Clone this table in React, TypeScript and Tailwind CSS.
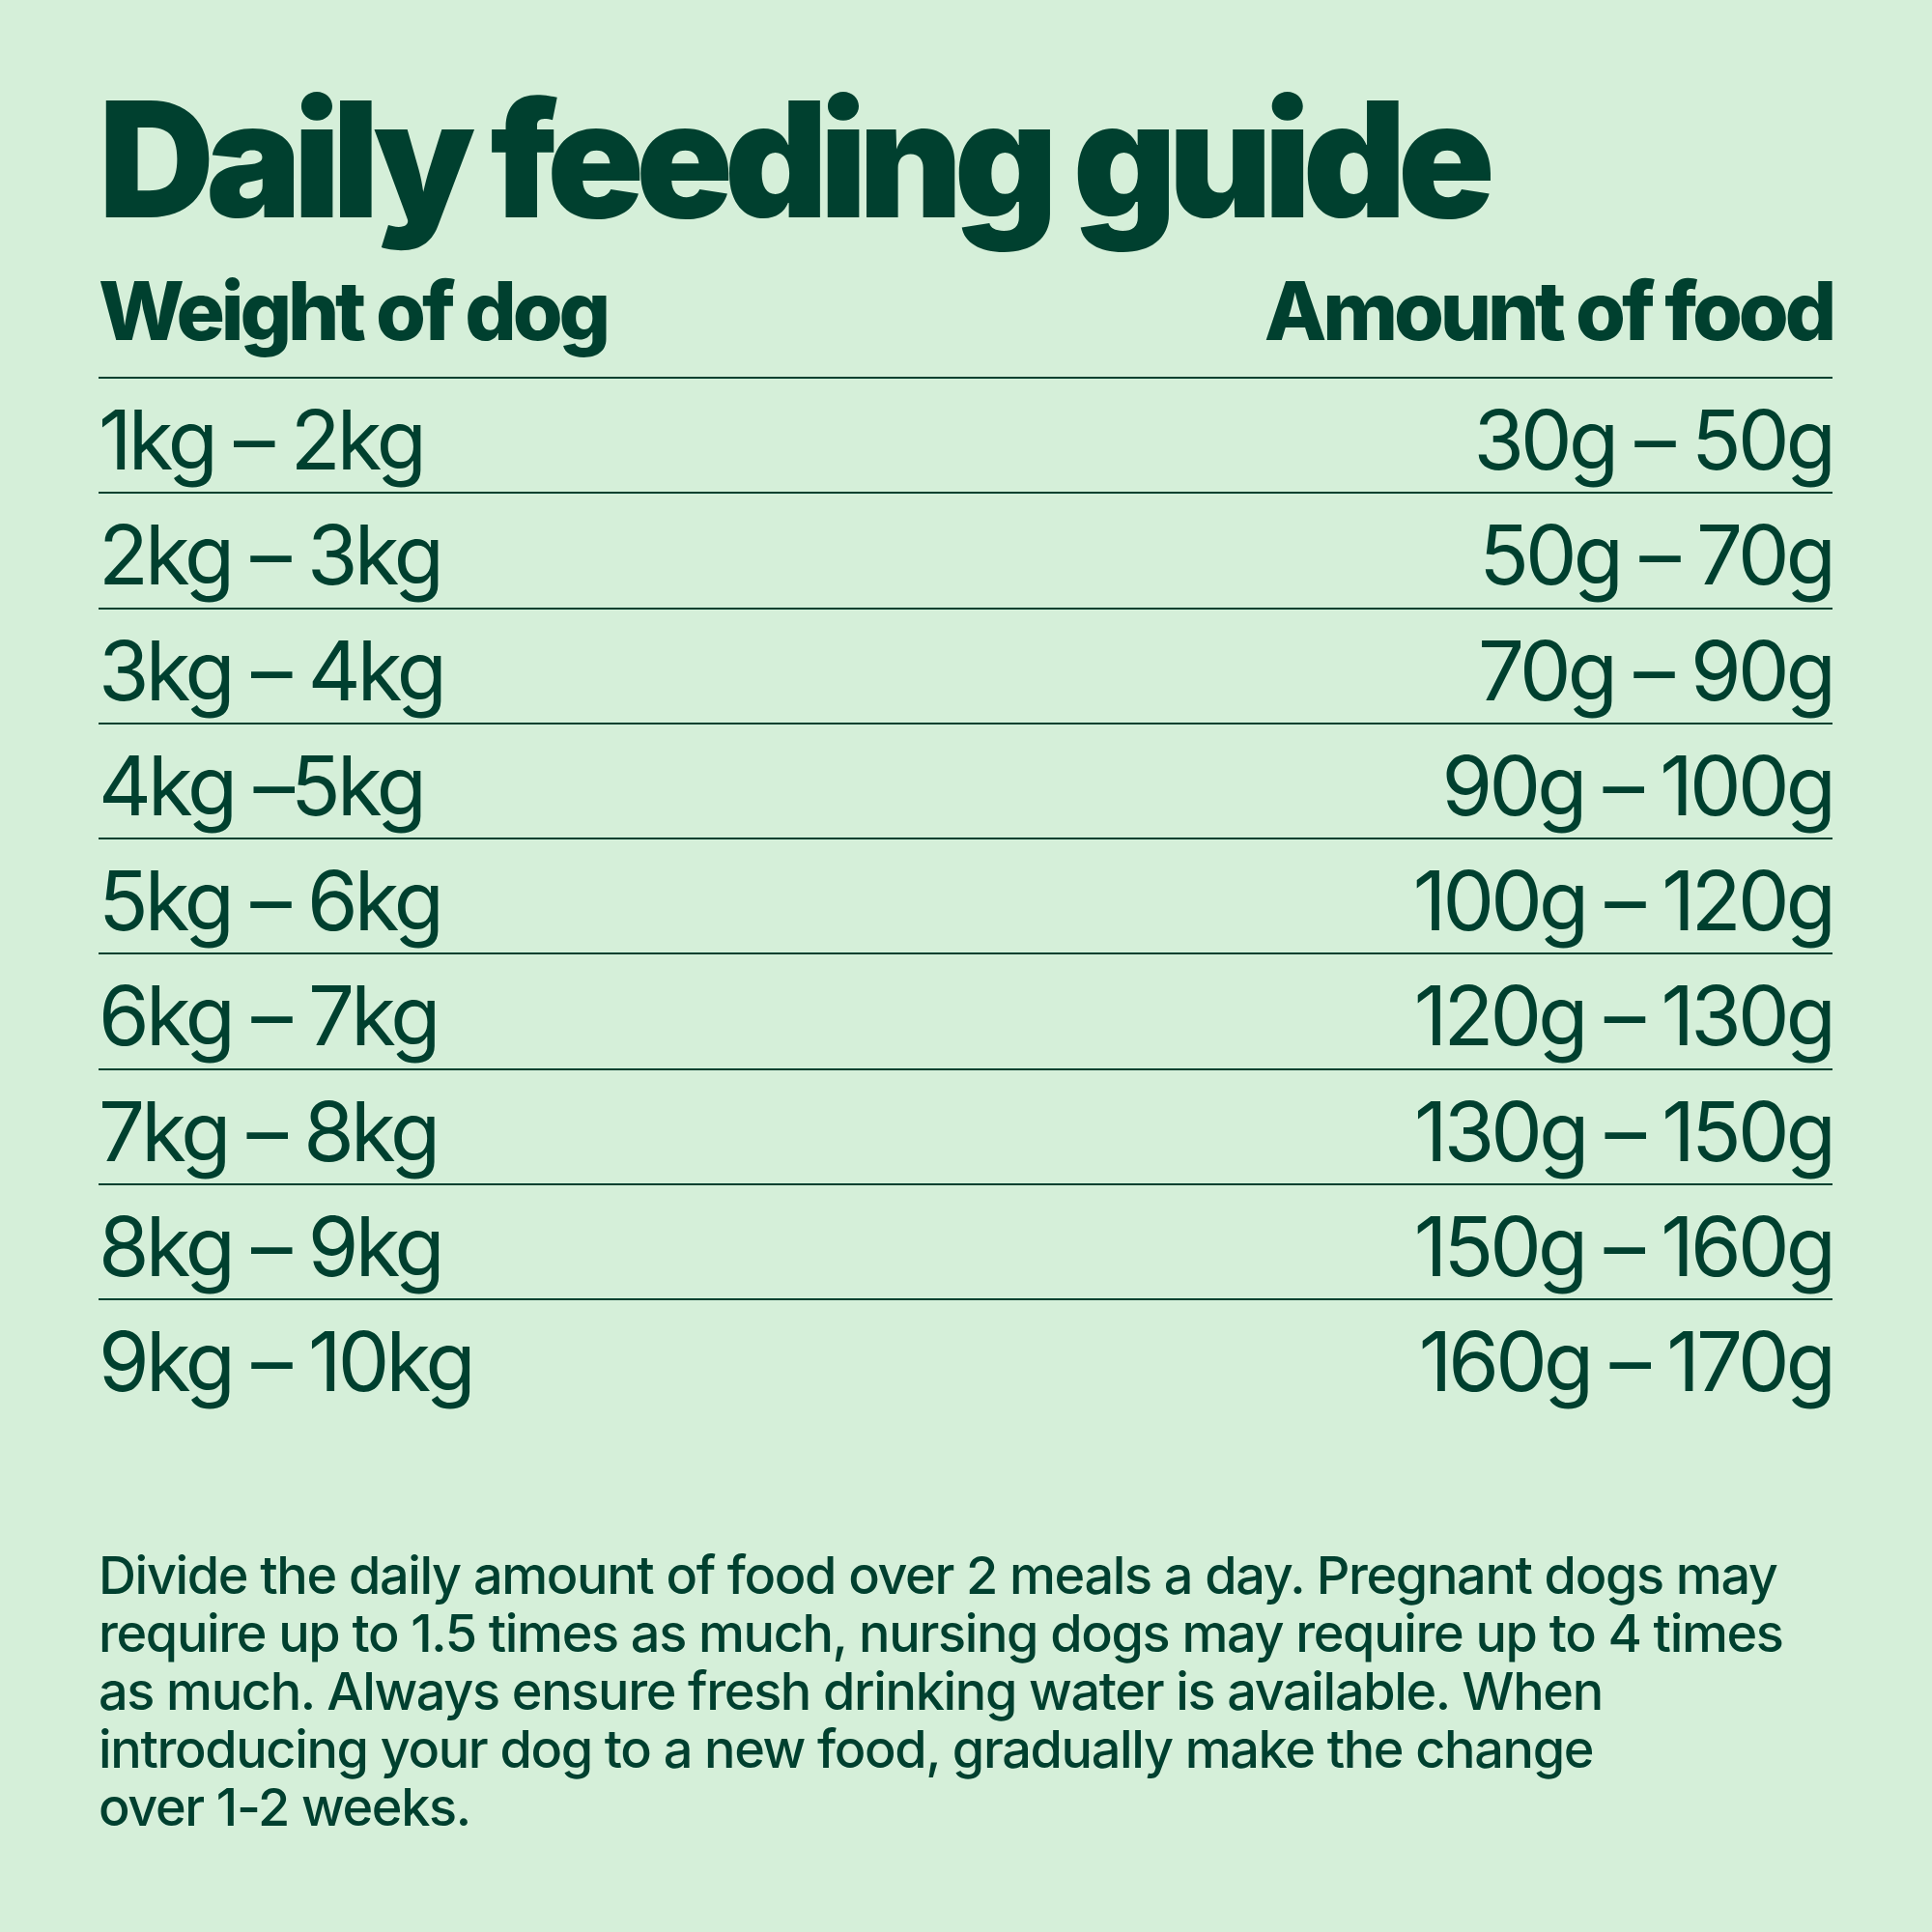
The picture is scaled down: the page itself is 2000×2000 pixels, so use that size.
const rows: [string, string][] = [
  ['1kg – 2kg', '30g – 50g'],
  ['2kg – 3kg', '50g – 70g'],
  ['3kg – 4kg', '70g – 90g'],
  ['4kg –5kg', '90g – 100g'],
  ['5kg – 6kg', '100g – 120g'],
  ['6kg – 7kg', '120g – 130g'],
  ['7kg – 8kg', '130g – 150g'],
  ['8kg – 9kg', '150g – 160g'],
  ['9kg – 10kg', '160g – 170g'],
];

export default function App() {
  return (
    <div
      className="w-[2000px] h-[2000px] bg-[#d5efd9] text-[#00402f] pl-[102px] pr-[103px] pt-[82px] flex flex-col"
      style={{ fontFamily: 'Inter, "Noto Sans", sans-serif' }}
    >
      {/* title */}
      <h1 className="text-[166px] leading-none font-black tracking-[-0.053em] h-[166px]">
        Daily feeding guide
      </h1>

      {/* table */}
      <div className="mt-[24px] flex flex-col">
        <div className="flex justify-between items-end h-[120px] pb-[26px] border-b-2 border-[#00402f] text-[84px] leading-none font-extrabold tracking-[-0.05em]">
          <span>Weight of dog</span>
          <span>Amount of food</span>
        </div>
        {rows.map(([w, a], i) => (
          <div
            key={w}
            className={
              'flex justify-between items-start h-[119.3px] pt-[14px] text-[85px] leading-[100px] tracking-[-0.045em] ' +
              (i < rows.length - 1 ? 'border-b-2 border-[#00402f]' : '')
            }
          >
            <span>{w}</span>
            <span>{a}</span>
          </div>
        ))}
      </div>

      {/* note */}
      <p className="mt-[135px] text-[54px] leading-[60px] font-medium tracking-[-0.025em] max-w-[1790px]">
        Divide the daily amount of food over 2 meals a day. Pregnant dogs may require up to 1.5 times as much, nursing
        dogs may require up to 4 times as much. Always ensure fresh drinking water is available. When introducing your
        dog to a new food, gradually make the change
        <br />
        over 1-2 weeks.
      </p>
    </div>
  );
}
